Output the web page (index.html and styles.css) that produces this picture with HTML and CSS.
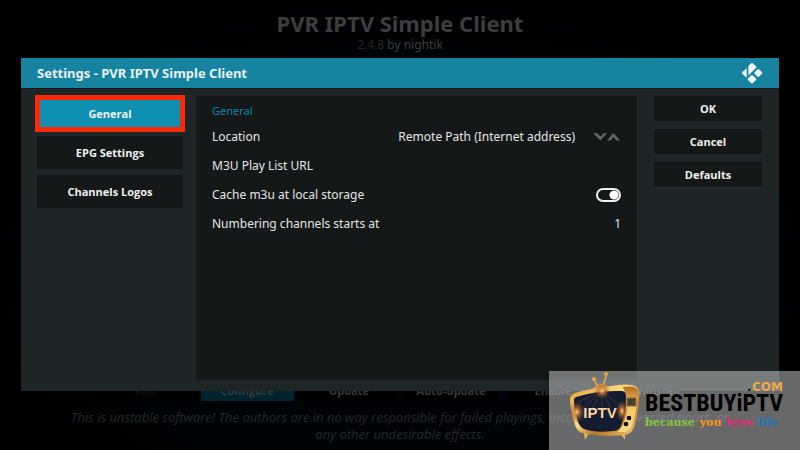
FILE: index.html
```
<!DOCTYPE html>
<html lang="en">
<head>
  <meta charset="UTF-8" />
  <meta name="viewport" content="width=device-width, initial-scale=1.0"/>
  <title>Settings - PVR IPTV Simple Client</title>
  <link rel="stylesheet" href="styles.css">
</head>
<body>
  <!-- add-on page behind the dialog -->
  <main class="addon">
    <h1>PVR IPTV Simple Client</h1>
    <p class="version">2.4.8 <span>by nightik</span></p>
    <div class="actions">
      <button type="button" class="disabled">Run</button>
      <button type="button" class="active">Configure</button>
      <button type="button">Update</button>
      <button type="button">Auto-update</button>
      <button type="button">Enable</button>
      <button type="button">Uninstall</button>
    </div>
    <p class="disclaimer">This is unstable software! The authors are in no way responsible for failed playings, incorrect EPG, wasted hours, or any other undesirable effects.</p>
  </main>

  <!-- settings dialog -->
  <div class="dialog" role="dialog" aria-labelledby="dialogTitle">
    <div class="dialog-header">
      <h2 id="dialogTitle">Settings - PVR IPTV Simple Client</h2>
      <svg class="kodi" viewBox="0 0 22 22" fill="#f4fafb">
        <path d="M10 1.4Q11 .4 12 1.4L15.2 4.6Q15.8 5.2 15.2 5.8L7.4 13.4V4.6Q7.4 4 7.8 3.6Z"/>
        <path d="M5.6 6.2V15.8L1.2 11.8Q.4 11 1.2 10.2Z"/>
        <path d="M16.7 7.2Q17.3 6.6 17.9 7.2L21 10.3Q21.6 11 21 11.7L17.9 14.8Q17.3 15.4 16.7 14.8L13.6 11.7Q13 11 13.6 10.3Z"/>
        <path d="M10.4 13.3Q11 12.7 11.6 13.3L15 16.6Q15.6 17.3 15 18L11.7 21.2Q11 21.8 10.3 21.2L7 18Q6.4 17.3 7 16.6Z"/>
      </svg>
    </div>
    <div class="dialog-body">
      <nav class="categories">
        <button type="button" class="selected">General</button>
        <button type="button">EPG Settings</button>
        <button type="button">Channels Logos</button>
      </nav>

      <form class="panel">
        <h3>General</h3>
        <div class="row">
          <label for="location">Location</label>
          <select id="location">
            <option>Remote Path (Internet address)</option>
            <option>Local Path</option>
          </select>
          <svg class="arrows" viewBox="0 0 28 10" fill="#626565">
            <path d="M0 1H4L7.500 4.500L11 1H14L7.500 8.500Z"/>
            <path d="M14 8.500L20.500 1L27 8.500H23.500L20.500 5L17.500 8.500Z"/>
          </svg>
        </div>
        <div class="row">
          <label for="playlist">M3U Play List URL</label>
          <input type="text" id="playlist" />
        </div>
        <div class="row">
          <label for="cache">Cache m3u at local storage</label>
          <input type="checkbox" id="cache" checked />
        </div>
        <div class="row">
          <label for="numbering">Numbering channels starts at</label>
          <input type="text" id="numbering" value="1" />
        </div>
      </form>

      <div class="buttons">
        <button type="button">OK</button>
        <button type="button">Cancel</button>
        <button type="button">Defaults</button>
      </div>
    </div>
  </div>

  <!-- site badge -->
  <aside class="badge">
    <svg class="tv" viewBox="0 0 72 72">
      <defs>
        <linearGradient id="gold" x1="0" y1="0" x2="1" y2="1">
          <stop offset="0" stop-color="#e9a13c"/>
          <stop offset=".45" stop-color="#fbdc86"/>
          <stop offset=".65" stop-color="#b87428"/>
          <stop offset="1" stop-color="#f6cf6e"/>
        </linearGradient>
        <linearGradient id="side" x1="0" y1="0" x2="0" y2="1">
          <stop offset="0" stop-color="#b06a20"/>
          <stop offset=".4" stop-color="#f3c566"/>
          <stop offset="1" stop-color="#f8d988"/>
        </linearGradient>
        <radialGradient id="glow">
          <stop offset="0" stop-color="#ffd08a"/>
          <stop offset=".4" stop-color="#c4702c" stop-opacity=".7"/>
          <stop offset="1" stop-color="#7a3b1c" stop-opacity="0"/>
        </radialGradient>
      </defs>
      <path d="M30 16L26 9M35 15L38 5" stroke="#e8ac4c" stroke-width="1.5"/>
      <circle cx="26" cy="8" r="2" fill="#e8a443"/>
      <circle cx="38" cy="3" r="2" fill="#e8a443"/>
      <path d="M24 19Q33 7 42 18Z" fill="#e3a248"/>
      <path d="M16 62H21L17 69ZM52 62H57L57 69Z" fill="#eab55a"/>
      <path d="M7 22Q24 17 50 14Q70 12 71 20Q73 29 67 53Q65 63 57 64Q33 66 15 62Q9 61 7 54Q2 37 2 28Q2 24 7 22Z" fill="url(#gold)"/>
      <path d="M55 16Q69 14 70 20Q71 28 65 52Q63 60 57 61L50 61Q57 54 58 41Q60 28 55 16Z" fill="url(#side)"/>
      <path d="M8 26Q29 19 54 20Q58 20 58 26Q58 43 53 55Q51 60 45 60Q27 62 16 58Q12 56 10 51Q6 38 6 29Q6 27 8 26Z" fill="#131c31"/>
      <path d="M34 20L10 31M34 20L15 37M34 20L24 38M34 20L34 39M34 20L43 38M34 20L53 36" stroke="#59483c" stroke-width=".6"/>
      <circle cx="34" cy="20" r="8" fill="url(#glow)"/>
      <ellipse cx="9" cy="41" rx="8" ry="11" fill="url(#glow)"/>
      <ellipse cx="54" cy="40" rx="6" ry="11" fill="url(#glow)"/>
      <rect x="59" y="27" width="9" height="8" fill="#4b4031" stroke="#8c6a37"/>
      <circle cx="61" cy="47" r="2.300" fill="#0b1020"/>
      <circle cx="58" cy="53" r="2.300" fill="#0b1020"/>
      <text x="32" y="47" text-anchor="middle" class="tv-text">IPTV</text>
    </svg>
    <div class="brand">
      <span class="brand-com"><i>.</i>COM</span>
      <span class="brand-name">BESTBUYiPTV</span>
      <span class="brand-tag">
        <b class="green">because</b>
        <b class="orange">you</b>
        <b class="pink">l<svg viewBox="0 0 10 10" fill="none" stroke="#e5287b" stroke-width="1.5"><path d="M5 9L1.4 5Q0 2 2.4 1.2Q4.4 1 5 3Q5.8 1 7.8 1.2Q10 2 8.6 5Z"/></svg>ve</b>
        <b class="blue">life</b>
      </span>
    </div>
  </aside>
</body>
</html>
```
FILE: styles.css
```
* {
  margin: 0; padding: 0;
  box-sizing: border-box;
  font-family: 'Noto Sans', sans-serif;
}
body {
  position: relative;
  min-height: 100vh;
  overflow: hidden;
  background: radial-gradient(ellipse at 50% 60%, #000508 0%, #000306 55%, #000 75%);
  color: #e4e5e5;
}
button {
  border: none;
  font-family: 'Open Sans', sans-serif;
  font-size: 11px;
  font-weight: bold;
  cursor: pointer;
}

/* add-on page */
.addon {
  min-height: 100vh;
  display: flex;
  flex-direction: column;
  align-items: center;
  padding-top: 7px;
  text-align: center;
}
.addon h1 {
  font-size: 22px;
  line-height: 32px;
  color: #3d3d3d;
}
.version {
  font-size: 12px;
  line-height: 12px;
  color: #222527;
}
.version span {
  color: #3b3d3e;
}
.actions {
  display: flex;
  gap: 9px;
  margin-top: auto;
}
.actions button {
  width: 93px;
  height: 30px;
  padding-top: 8px;
  background-color: #000;
  color: #35393b;
}
.actions .active {
  background-color: #00242e;
}
.actions .disabled {
  color: #0c0f10;
}
.disclaimer {
  max-width: 676px;
  padding: 8px 0 7px;
  font-family: 'Open Sans', sans-serif;
  font-size: 13px;
  line-height: 17px;
  font-style: italic;
  color: #24282a;
}

/* dialog */
.dialog {
  position: absolute;
  top: 58px;
  bottom: 59px;
  left: 21px;
  right: 21px;
  display: flex;
  flex-direction: column;
  background-color: #1e2527;
}
.dialog-header {
  display: flex;
  align-items: center;
  justify-content: space-between;
  height: 30px;
  padding: 0 16px;
  background-color: #1684a1;
}
.dialog-header h2 {
  font-size: 13px;
  color: #e8f1f3;
}
.kodi {
  width: 22px;
  height: 22px;
}
.dialog-body {
  flex: 1;
  display: grid;
  grid-template-columns: 146px 1fr 108px;
  padding: 7px 17px 11px 16px;
  border-top: 1px solid #1c1413;
}
.categories, .buttons {
  display: flex;
  flex-direction: column;
}
.categories {
  gap: 6px;
  padding-top: 1px;
}
.buttons {
  gap: 8px;
}
.categories button, .buttons button {
  height: 33px;
  border-radius: 2px;
  background-color: #141819;
  color: #f0f0f0;
}
.buttons button {
  height: 25px;
}
.categories .selected {
  border-radius: 0;
  background-color: #0f90b0;
  outline: 5px solid #fb2a06;
  outline-offset: -3px;
}
.panel {
  margin: 0 17px 0 13px;
  padding: 4px 16px;
  border-radius: 2px;
  background-color: #141819;
}
.panel h3 {
  font-size: 11px;
  font-weight: normal;
  line-height: 22px;
  color: #0f85a3;
}
.row {
  display: flex;
  align-items: center;
  height: 29px;
  font-size: 12px;
}
.row label {
  flex: 1;
  white-space: nowrap;
}
.row select, .row input {
  border: none;
  background: none;
  color: #e4e5e5;
  font-size: 12px;
  text-align: right;
}
.row select {
  appearance: none;
}
.row input[type="text"] {
  width: 180px;
}
.row input[type="checkbox"] {
  appearance: none;
  width: 25px;
  height: 14px;
  border: 2px solid #f0f0f0;
  border-radius: 7px;
  background: radial-gradient(circle at 16px 5px, #fff 4px, transparent 5px);
}
.arrows {
  width: 28px;
  height: 10px;
  margin-left: 18px;
}

/* site badge */
.badge {
  position: absolute;
  right: 0;
  bottom: 0;
  display: flex;
  width: 251px;
  height: 79px;
  padding-left: 19px;
  background-color: rgba(230, 230, 230, 0.45);
}
.tv {
  width: 72px;
  height: 72px;
}
.tv-text {
  font-family: 'Liberation Sans', sans-serif;
  font-size: 15px;
  font-weight: bold;
  fill: #f8d6a0;
}
.brand {
  display: flex;
  flex-direction: column;
  width: 138px;
  margin-left: 5px;
  padding-top: 11px;
  white-space: nowrap;
}
.brand-com {
  align-self: flex-end;
  font-size: 12px;
  line-height: 10px;
  font-weight: bold;
  color: #edaa4d;
}
.brand-com, .brand-com i {
  font-family: 'DejaVu Sans', sans-serif;
}
.brand-com i {
  color: #1b1208;
}
.brand-name {
  font-family: 'Liberation Sans Narrow', 'Roboto Condensed', 'Liberation Sans', sans-serif;
  font-size: 24px;
  line-height: 22px;
  font-weight: bold;
  color: #000;
}
.brand-tag {
  display: flex;
  gap: 5px;
  line-height: 18px;
}
.brand-tag b {
  font-family: 'DejaVu Serif', serif;
  font-size: 11px;
}
.brand-tag svg {
  width: 9px;
  height: 9px;
  vertical-align: -2px;
}
.green { color: #85c83c; }
.orange { color: #f7941e; }
.pink { color: #e5287b; }
.blue { color: #1f78bd; }
```
